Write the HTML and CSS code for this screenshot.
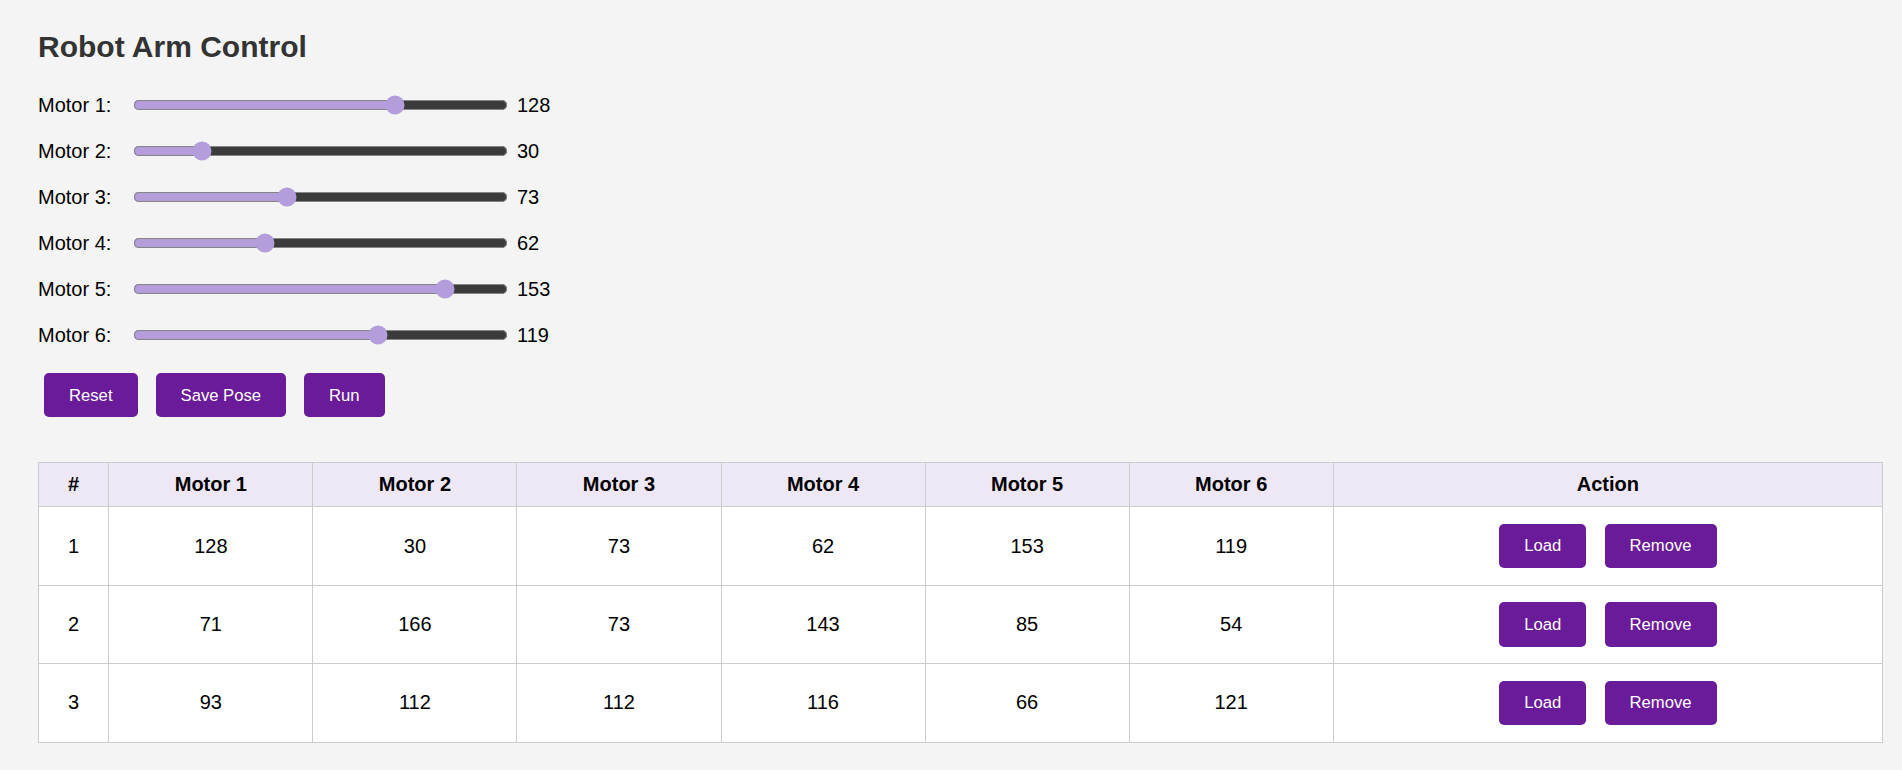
FILE: index.html
```html
<!DOCTYPE html>
<html lang="en">
<head>
<meta charset="utf-8">
<title>Robot Arm Control</title>
<link rel="stylesheet" href="styles.css">
</head>
<body>
<div class="app">
  <h1 class="title">Robot Arm Control</h1>
  <div class="sliders">
    <div class="slider-row"><label class="slider-label">Motor 1:</label><input class="slider" type="range" min="0" max="180" value="128"><span class="slider-value">128</span></div>
    <div class="slider-row"><label class="slider-label">Motor 2:</label><input class="slider" type="range" min="0" max="180" value="30"><span class="slider-value">30</span></div>
    <div class="slider-row"><label class="slider-label">Motor 3:</label><input class="slider" type="range" min="0" max="180" value="73"><span class="slider-value">73</span></div>
    <div class="slider-row"><label class="slider-label">Motor 4:</label><input class="slider" type="range" min="0" max="180" value="62"><span class="slider-value">62</span></div>
    <div class="slider-row"><label class="slider-label">Motor 5:</label><input class="slider" type="range" min="0" max="180" value="153"><span class="slider-value">153</span></div>
    <div class="slider-row"><label class="slider-label">Motor 6:</label><input class="slider" type="range" min="0" max="180" value="119"><span class="slider-value">119</span></div>
  </div>
  <div class="actions">
    <button class="btn">Reset</button>
    <button class="btn">Save Pose</button>
    <button class="btn">Run</button>
  </div>
  <table class="poses">
    <thead>
      <tr><th>#</th><th>Motor 1</th><th>Motor 2</th><th>Motor 3</th><th>Motor 4</th><th>Motor 5</th><th>Motor 6</th><th>Action</th></tr>
    </thead>
    <tbody>
      <tr><td>1</td><td>128</td><td>30</td><td>73</td><td>62</td><td>153</td><td>119</td><td><div class="row-actions"><button class="btn">Load</button><button class="btn">Remove</button></div></td></tr>
      <tr><td>2</td><td>71</td><td>166</td><td>73</td><td>143</td><td>85</td><td>54</td><td><div class="row-actions"><button class="btn">Load</button><button class="btn">Remove</button></div></td></tr>
      <tr><td>3</td><td>93</td><td>112</td><td>112</td><td>116</td><td>66</td><td>121</td><td><div class="row-actions"><button class="btn">Load</button><button class="btn">Remove</button></div></td></tr>
    </tbody>
  </table>
</div>
</body>
</html>
```

FILE: styles.css
```css
html, body {
  margin: 0;
  padding: 0;
}

body {
  background: #f4f4f4;
  font-family: "Liberation Sans", Arial, sans-serif;
  font-size: 20px;
  color: #000;
}

.app {
  padding: 30px 19px 40px 38px;
}

.title {
  margin: 0 0 24px 0;
  font-size: 30px;
  line-height: 34px;
  font-weight: bold;
  color: #333;
}

.sliders {
  display: flex;
  flex-direction: column;
  gap: 12px;
}

.slider-row {
  display: flex;
  align-items: center;
  height: 34px;
}

.slider-label {
  flex: none;
  width: 92.5px;
  line-height: 23px;
}

.slider {
  zoom: 1.25;
  width: 300px;
  margin: 2px;
  accent-color: #b39ddb;
}

.slider-value {
  margin-left: 6.5px;
  line-height: 23px;
}

.actions {
  display: flex;
  gap: 18px;
  padding: 6px 6px;
  margin-top: 15px;
}

.btn {
  background: #6a1b9a;
  color: #fff;
  border: none;
  border-radius: 5px;
  padding: 12.5px 25px;
  font-family: "Liberation Sans", Arial, sans-serif;
  font-size: 16.67px;
  line-height: 19.4px;
  cursor: pointer;
}

.poses {
  width: 100%;
  margin-top: 39px;
  border-collapse: collapse;
  background: #fff;
}

.poses th,
.poses td {
  border: 1px solid #ccc;
  padding: 10px;
  text-align: center;
  line-height: 23px;
}

.poses th {
  background: #ede7f6;
  font-weight: bold;
}

.row-actions {
  display: flex;
  justify-content: center;
  gap: 18.3px;
  padding: 6.5px 6.25px;
}
```
